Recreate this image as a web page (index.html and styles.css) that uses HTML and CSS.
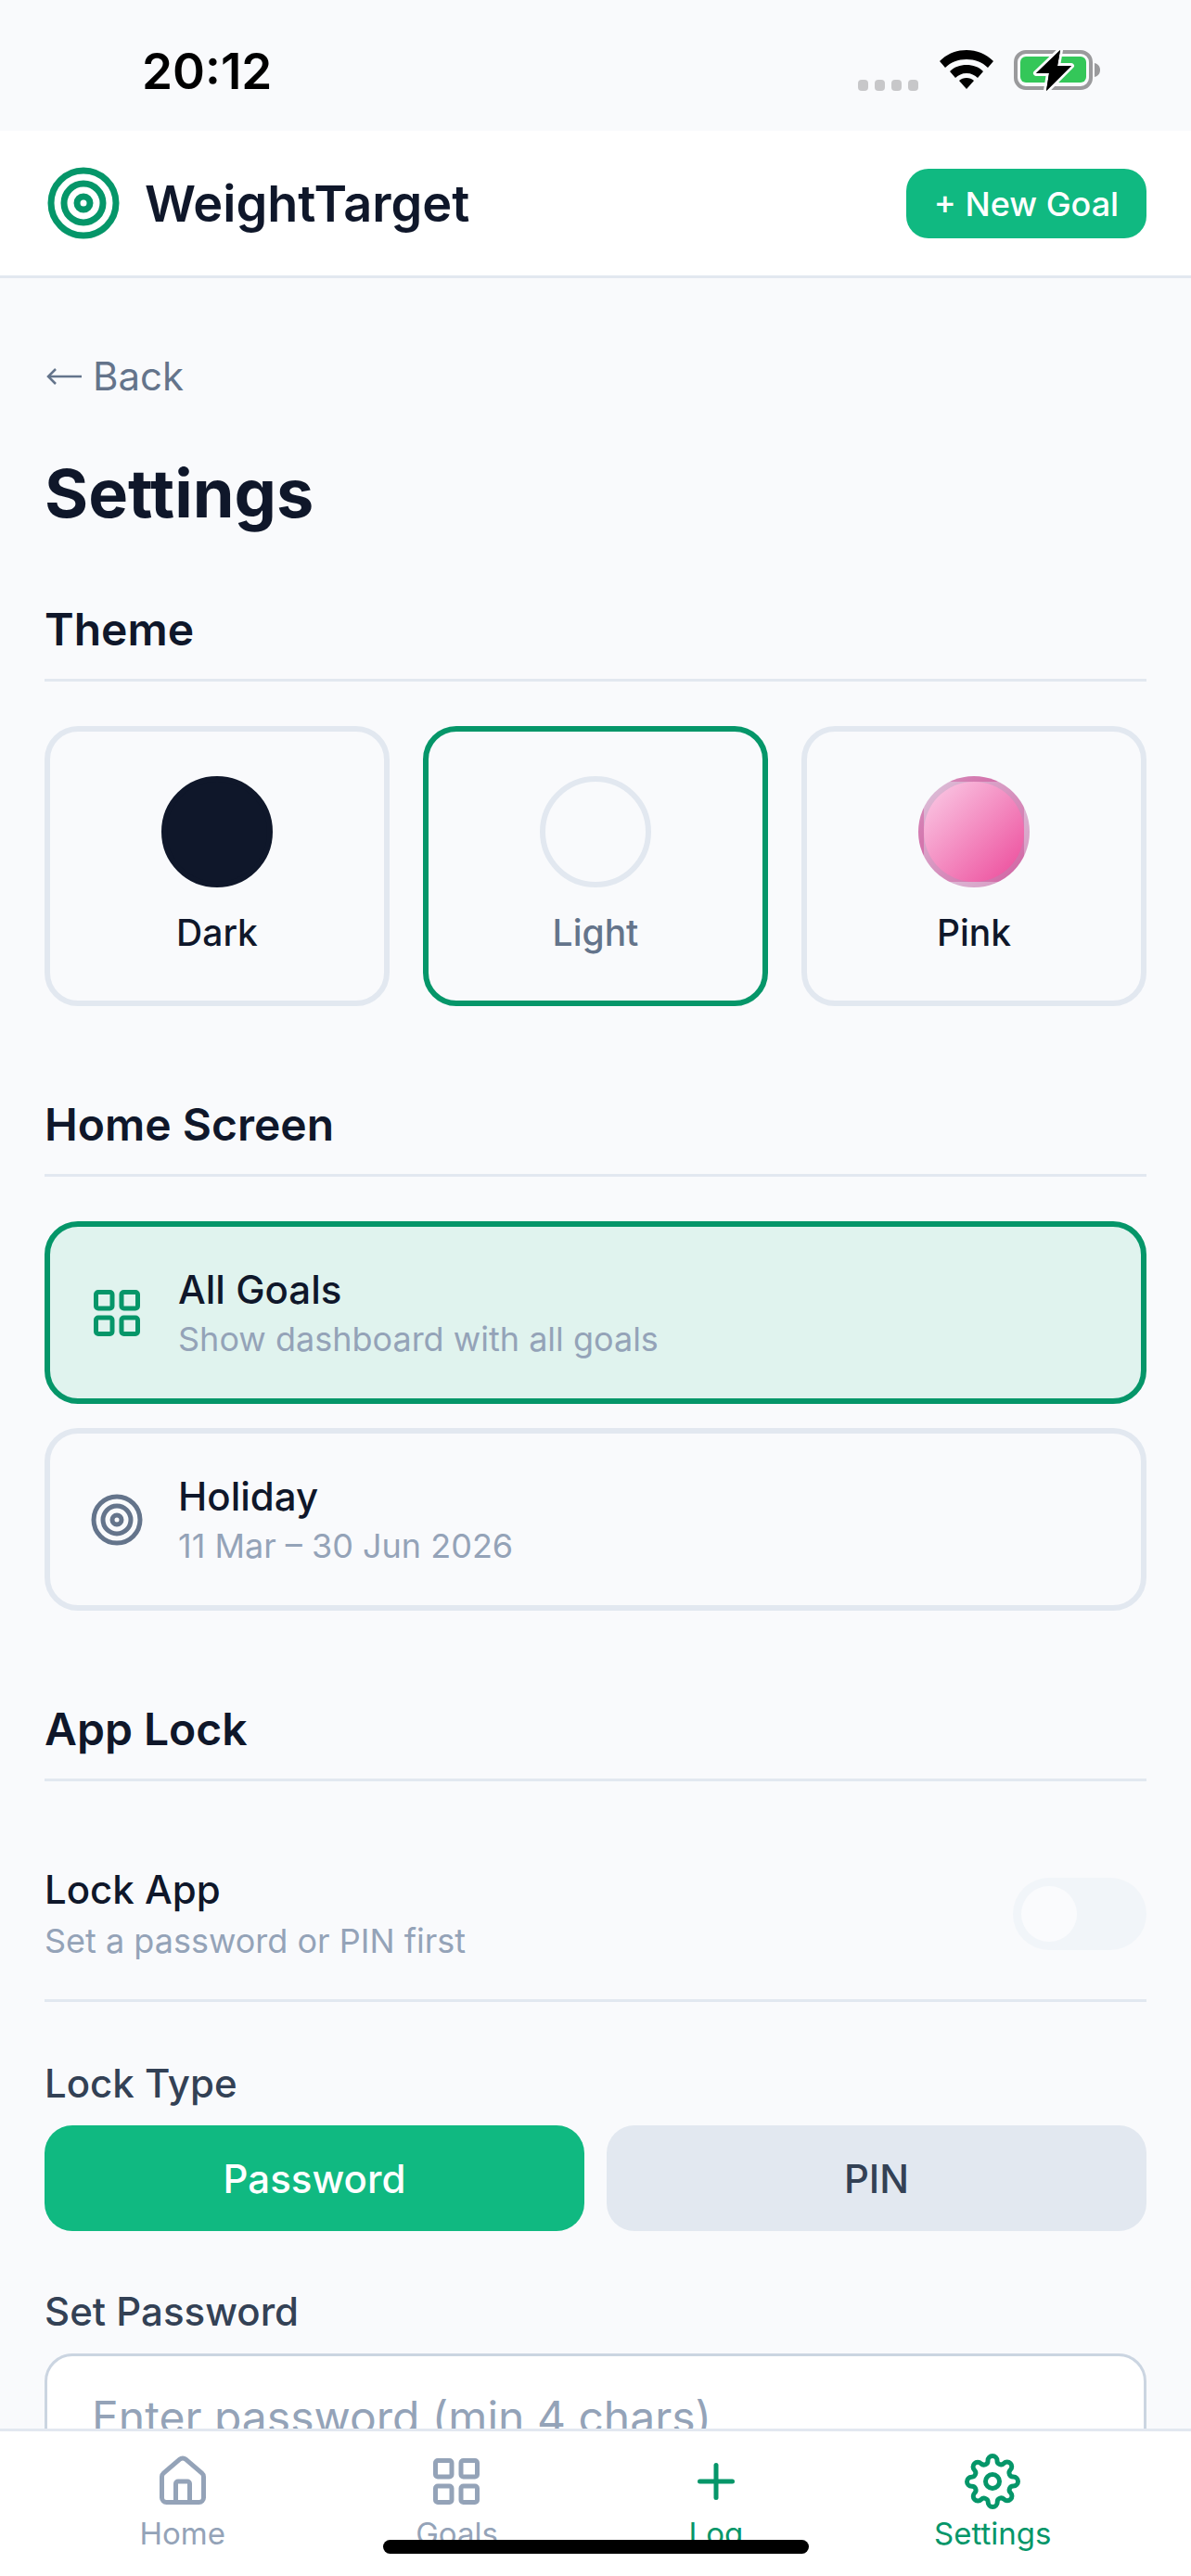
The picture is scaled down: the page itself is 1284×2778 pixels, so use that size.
FILE: index.html
```html
<!DOCTYPE html>
<html lang="en">
<head>
<meta charset="utf-8">
<title>WeightTarget Settings</title>
<link rel="stylesheet" href="styles.css">
</head>
<body>
<div class="app">
  <div class="status">
    <span class="time">20:12</span>
    <div class="status-icons">
      <div class="dots"><i></i><i></i><i></i><i></i></div>
      <svg class="wifi" viewBox="0 0 58 42"><path d="M29 0C18 0 8 4 0 12l6 7c6-6 14-9 23-9s17 3 23 9l6-7C50 4 40 0 29 0z"/><path d="M29 16c-7 0-13 2-18 7l6 7c3-3 7-5 12-5s9 2 12 5l6-7c-5-5-11-7-18-7z"/><path d="M29 30c-3 0-6 1-8 3l8 9 8-9c-2-2-5-3-8-3z"/></svg>
      <svg class="battery" viewBox="0 0 94 46"><rect x="2" y="3" width="81" height="39" rx="11" fill="none" stroke="#9a9a9c" stroke-width="4"/><rect x="7" y="8" width="71" height="28" rx="6" fill="#34c759"/><path d="M87 15c4 1 6 4 6 7.500s-2 6.500-6 7.500z" fill="#9a9a9c"/><path d="M50 1 24 26h14l-3 19 27-27H47z" fill="#000" stroke="#fafbfd" stroke-width="6" stroke-linejoin="round" paint-order="stroke"/><path d="M50 1 24 26h14l-3 19 27-27H47z" fill="#000"/></svg>
    </div>
  </div>
  <header class="topbar">
    <div class="brand">
      <svg class="logo" viewBox="0 0 24 24" fill="none" stroke="currentColor" stroke-width="2"><circle cx="12" cy="12" r="10"/><circle cx="12" cy="12" r="6"/><circle cx="12" cy="12" r="2"/></svg>
      <span class="brand-name">WeightTarget</span>
    </div>
    <button class="new-goal">+ New Goal</button>
  </header>
  <main class="content">
    <a class="back"><svg class="back-arrow" viewBox="0 0 38 18" fill="none" stroke="currentColor" stroke-width="2.500"><path d="M38 9H2"/><path d="M10 1 2 9l8 8"/></svg>Back</a>
    <h1 class="page-title">Settings</h1>
    <section class="section">
      <h2 class="section-title">Theme</h2>
      <div class="themes">
        <div class="theme"><span class="swatch swatch-dark"></span><span class="theme-label">Dark</span></div>
        <div class="theme theme-active"><span class="swatch swatch-light"></span><span class="theme-label theme-label-muted">Light</span></div>
        <div class="theme"><span class="swatch swatch-pink"></span><span class="theme-label">Pink</span></div>
      </div>
    </section>
    <section class="section">
      <h2 class="section-title">Home Screen</h2>
      <div class="options">
        <div class="option option-active">
          <svg class="option-icon" viewBox="0 0 24 24" fill="none" stroke="currentColor" stroke-width="2"><rect x="3" y="3" width="7" height="7" rx="1"/><rect x="14" y="3" width="7" height="7" rx="1"/><rect x="14" y="14" width="7" height="7" rx="1"/><rect x="3" y="14" width="7" height="7" rx="1"/></svg>
          <div class="option-text"><div class="option-title">All Goals</div><div class="option-sub">Show dashboard with all goals</div></div>
        </div>
        <div class="option">
          <svg class="option-icon" viewBox="0 0 24 24" fill="none" stroke="currentColor" stroke-width="2"><circle cx="12" cy="12" r="10"/><circle cx="12" cy="12" r="6"/><circle cx="12" cy="12" r="2"/></svg>
          <div class="option-text"><div class="option-title">Holiday</div><div class="option-sub">11 Mar – 30 Jun 2026</div></div>
        </div>
      </div>
    </section>
    <section class="section section-lock">
      <h2 class="section-title">App Lock</h2>
      <div class="lock-row">
        <div><div class="option-title">Lock App</div><div class="option-sub">Set a password or PIN first</div></div>
        <span class="toggle"><span class="toggle-thumb"></span></span>
      </div>
      <div class="field-label">Lock Type</div>
      <div class="segments">
        <button class="segment segment-active">Password</button>
        <button class="segment">PIN</button>
      </div>
      <div class="field-label field-label-pw">Set Password</div>
      <input class="input" placeholder="Enter password (min 4 chars)">
    </section>
  </main>
  <nav class="tabs">
    <div class="tab">
      <svg viewBox="0 0 24 24" fill="none" stroke="currentColor" stroke-width="2" stroke-linecap="round" stroke-linejoin="round"><path d="M15 21v-8a1 1 0 0 0-1-1h-4a1 1 0 0 0-1 1v8"/><path d="M3 10a2 2 0 0 1 .709-1.528l7-5.999a2 2 0 0 1 2.582 0l7 5.999A2 2 0 0 1 21 10v9a2 2 0 0 1-2 2H5a2 2 0 0 1-2-2z"/></svg>
      <span>Home</span>
    </div>
    <div class="tab">
      <svg viewBox="0 0 24 24" fill="none" stroke="currentColor" stroke-width="2"><rect x="3" y="3" width="7" height="7" rx="1"/><rect x="14" y="3" width="7" height="7" rx="1"/><rect x="14" y="14" width="7" height="7" rx="1"/><rect x="3" y="14" width="7" height="7" rx="1"/></svg>
      <span>Goals</span>
    </div>
    <div class="tab tab-active">
      <svg viewBox="0 0 24 24" fill="none" stroke="currentColor" stroke-width="2" stroke-linecap="round"><path d="M5 12h14"/><path d="M12 5v14"/></svg>
      <span>Log</span>
    </div>
    <div class="tab tab-active">
      <svg viewBox="0 0 24 24" fill="none" stroke="currentColor" stroke-width="2" stroke-linecap="round" stroke-linejoin="round"><circle cx="12" cy="12" r="3"/><path d="M19.4 15a1.65 1.65 0 0 0 .33 1.82l.06.06a2 2 0 0 1 0 2.83 2 2 0 0 1-2.83 0l-.06-.06a1.65 1.65 0 0 0-1.82-.33 1.65 1.65 0 0 0-1 1.51V21a2 2 0 0 1-2 2 2 2 0 0 1-2-2v-.09A1.65 1.65 0 0 0 9 19.4a1.65 1.65 0 0 0-1.82.33l-.06.06a2 2 0 0 1-2.83 0 2 2 0 0 1 0-2.83l.06-.06a1.65 1.65 0 0 0 .33-1.82 1.65 1.65 0 0 0-1.51-1H3a2 2 0 0 1-2-2 2 2 0 0 1 2-2h.09A1.65 1.65 0 0 0 4.6 9a1.65 1.65 0 0 0-.33-1.82l-.06-.06a2 2 0 0 1 0-2.83 2 2 0 0 1 2.83 0l.06.06a1.65 1.65 0 0 0 1.82.33H9a1.65 1.65 0 0 0 1-1.51V3a2 2 0 0 1 2-2 2 2 0 0 1 2 2v.09a1.65 1.65 0 0 0 1 1.51 1.65 1.65 0 0 0 1.82-.33l.06-.06a2 2 0 0 1 2.83 0 2 2 0 0 1 0 2.83l-.06.06a1.65 1.65 0 0 0-.33 1.82V9a1.65 1.65 0 0 0 1.51 1H21a2 2 0 0 1 2 2 2 2 0 0 1-2 2h-.09a1.65 1.65 0 0 0-1.51 1z"/></svg>
      <span>Settings</span>
    </div>
    <div class="home-indicator"></div>
  </nav>
</div>
</body>
</html>
```
FILE: styles.css
```css
* { box-sizing: border-box; }
html, body { margin: 0; padding: 0; }
body { font-family: Inter, "Noto Sans", sans-serif; background: #f9fafc; color: #0f172a; }
.app { width: 1284px; height: 2778px; display: flex; flex-direction: column; overflow: hidden; background: #f9fafc; }

.status { height: 141px; flex: none; display: flex; justify-content: space-between; padding: 47px 0 0 153px; }
.time { font-size: 53px; font-weight: 600; line-height: 60px; color: #000; }
.status-icons { display: flex; align-items: flex-start; padding: 6px 97px 0 0; }
.dots { display: flex; gap: 7px; margin: 33px 23px 0 0; }
.dots i { width: 11px; height: 12px; border-radius: 4px; background: #c7c7c9; }
.wifi { width: 58px; height: 42px; margin: 1px 22px 0 0; }
.battery { width: 94px; height: 46px; }

.topbar { height: 159px; flex: none; background: #fff; border-bottom: 3px solid #e2e8f0; display: flex; align-items: center; justify-content: space-between; padding: 0 48px; }
.brand { display: flex; align-items: center; gap: 24px; }
.logo { width: 84px; height: 84px; color: #059669; }
.brand-name { font-size: 54px; font-weight: 600; }
.new-goal { border: 0; width: 259px; height: 75px; border-radius: 24px; background: #10b981; color: #fff; font: 500 36px Inter, sans-serif; padding-top: 2px; }

.content { flex: 1; min-height: 0; overflow: hidden; padding: 81px 48px 0; }
.back { display: flex; align-items: center; font-size: 42px; line-height: 50px; color: #64748b; }
.back-arrow { width: 38px; height: 18px; flex: none; margin: 0 12px 0 2px; }
.page-title { margin: 57px 0 0; font-size: 72px; line-height: 88px; font-weight: 700; }
.section { margin-top: 74px; }
.section + .section { margin-top: 99px; }
.section-title { margin: 0 0 48px; padding-bottom: 24px; border-bottom: 3px solid #e2e8f0; font-size: 48px; line-height: 58px; font-weight: 600; }

.themes { display: flex; gap: 36px; }
.theme { flex: 1; height: 302px; border: 6px solid #e2e8f0; border-radius: 36px; display: flex; flex-direction: column; align-items: center; padding-top: 48px; }
.theme-active { border-color: #059669; }
.swatch { width: 120px; height: 120px; border-radius: 50%; }
.swatch-dark { background: #0f172a; border: 6px solid #0f172a; }
.swatch-light { border: 6px solid #e2e8f0; background: #f9fafc; }
.swatch-pink { border: 6px solid rgba(148, 163, 184, 0.3); background: linear-gradient(135deg, #fbcfe8, #ec4899); }
.theme-label { margin-top: 24px; font-size: 39px; line-height: 50px; font-weight: 500; }
.theme-label-muted { color: #64748b; }

.options { display: flex; flex-direction: column; gap: 26px; }
.option { height: 197px; border: 6px solid #e2e8f0; border-radius: 36px; display: flex; align-items: center; gap: 36px; padding: 0 42px; color: #64748b; }
.option-active { border-color: #059669; background: #e0f3ee; color: #059669; }
.option-icon { width: 60px; height: 60px; flex: none; }
.option-title { font-size: 42px; line-height: 50px; font-weight: 500; color: #0f172a; }
.option-sub { margin-top: 6px; font-size: 36px; line-height: 44px; color: #94a3b8; }

.section-lock .section-title { margin-bottom: 0; }
.lock-row { height: 238px; padding-top: 50px; border-bottom: 3px solid #e2e8f0; display: flex; align-items: center; justify-content: space-between; }
.lock-row .option-sub { margin-top: 8px; }
.toggle { width: 144px; height: 78px; border-radius: 39px; background: #f1f5f9; padding: 9px; flex: none; }
.toggle-thumb { display: block; width: 60px; height: 60px; border-radius: 50%; background: #fafbfd; }
.field-label { margin: 63px 0 0; font-size: 42px; line-height: 50px; font-weight: 500; color: #334155; }
.segments { display: flex; gap: 24px; margin-top: 20px; }
.segment { flex: 1; height: 114px; border: 0; border-radius: 30px; background: #e2e8f0; color: #334155; font: 500 42px Inter, sans-serif; }
.segment-active { background: #10b981; color: #fff; }
.field-label-pw { margin-top: 62px; }
.input { display: block; width: 100%; height: 136px; margin-top: 20px; padding: 0 48px; border: 3px solid #cbd5e1; border-radius: 30px; background: #fff; font: 48px Inter, sans-serif; }
.input::placeholder { color: #94a3b8; opacity: 1; }

.tabs { position: relative; height: 159px; flex: none; background: #fff; border-top: 3px solid #e2e8f0; display: flex; justify-content: space-around; padding: 24px 48px 0; overflow: hidden; }
.tab { display: flex; flex-direction: column; align-items: center; gap: 6px; color: #94a3b8; font-size: 33px; line-height: 40px; font-weight: 400; min-width: 56px; }
.tab svg { width: 60px; height: 60px; flex: none; }
.tab-active { color: #059669; }
.home-indicator { position: absolute; left: 413px; top: 117px; width: 459px; height: 15px; border-radius: 8px; background: #000; }
```
